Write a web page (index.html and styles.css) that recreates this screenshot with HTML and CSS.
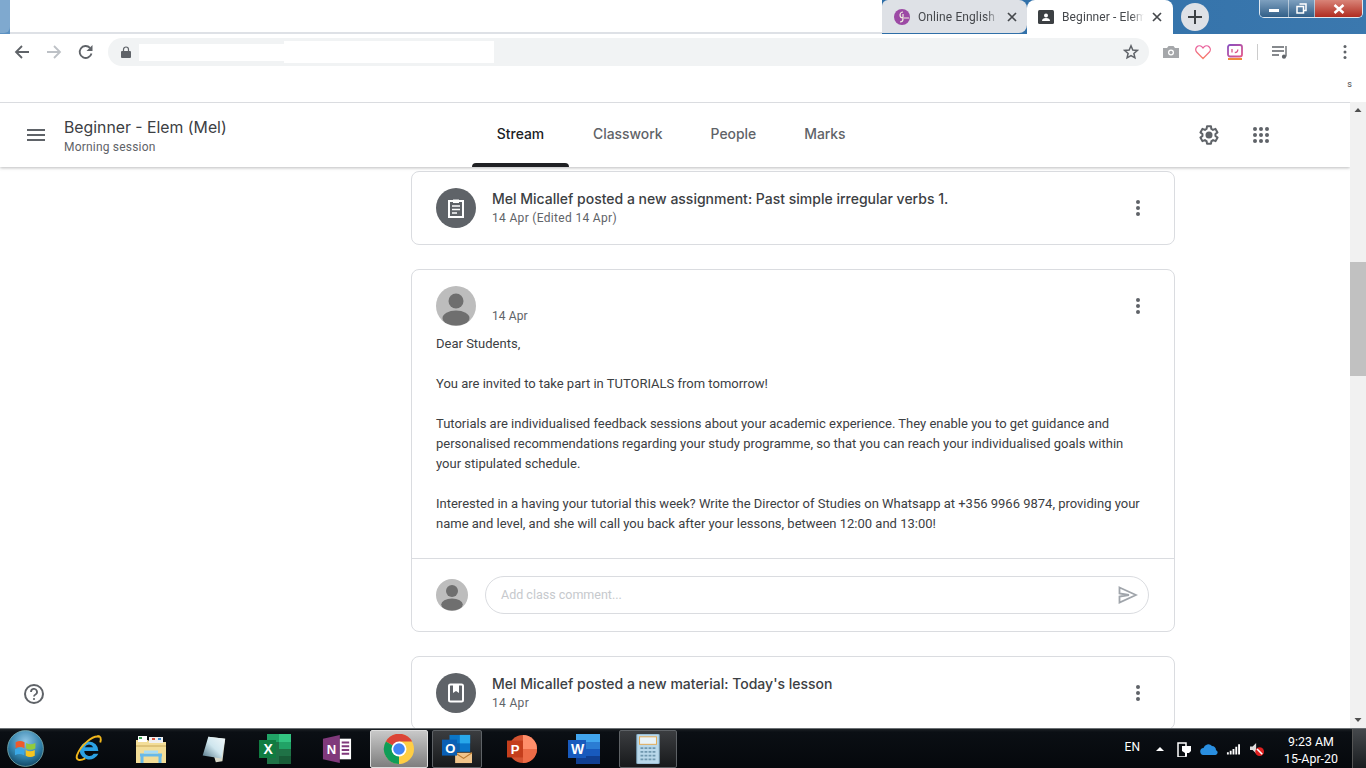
FILE: index.html
```html
<!DOCTYPE html>
<html lang="en">
<head>
<meta charset="utf-8">
<title>Beginner - Elem (Mel)</title>
<link rel="stylesheet" href="styles.css">
</head>
<body>
<div class="chrome-top">
  <div class="edge-left"></div>
  <div class="tab-blank"></div>
  <div class="tab tab-bg">
    <svg class="favicon" viewBox="0 0 16 16"><circle cx="8" cy="8" r="8" fill="#9c4aa5"/><path d="M9 3a3 3 0 1 0 0 6M9 5v5q0 3-3 3" fill="none" stroke="#eed" stroke-width="1.2"/><path d="M10 9h5" stroke="#eed"/></svg>
    <span class="tab-title">Online English C</span>
    <svg class="tab-x" viewBox="0 0 10 10"><path d="M1 1l8 8M9 1l-8 8" stroke="#45484c" stroke-width="1.7"/></svg>
  </div>
  <div class="tab tab-on">
    <svg class="favicon" viewBox="0 0 16 16"><rect width="16" height="14" y="1" rx="1.5" fill="#3c4043"/><circle cx="8" cy="6.5" r="2" fill="#fff"/><path d="M4 12q0-3 4-3t4 3z" fill="#fff"/></svg>
    <span class="tab-title">Beginner - Elem</span>
    <svg class="tab-x" viewBox="0 0 10 10"><path d="M1 1l8 8M9 1l-8 8" stroke="#45484c" stroke-width="1.7"/></svg>
  </div>
  <div class="newtab"><svg viewBox="0 0 14 14" width="14" height="14"><path d="M7 0v14M0 7h14" stroke="#3c4043" stroke-width="2"/></svg></div>
  <div class="winctl">
    <div class="wc wc-min"><span class="wc-dash"></span></div>
    <div class="wc wc-max"><svg viewBox="0 0 11 11" width="11" height="11"><path d="M3.500 1h6.500v6.500h-2M1 3.500h6.500v6.500h-6.500z" fill="none" stroke="#fff" stroke-width="1.500"/></svg></div>
    <div class="wc wc-close"><svg viewBox="0 0 12 10" width="12" height="10"><path d="M1.500 1l9 8M10.500 1l-9 8" stroke="#fff" stroke-width="2.500"/></svg></div>
  </div>
</div>

<div class="toolbar">
  <svg class="nav-ic" viewBox="0 0 16 16"><path d="M15 8H2M8 2L2 8l6 6" fill="none" stroke="#5f6368" stroke-width="1.800"/></svg>
  <svg class="nav-ic" viewBox="0 0 16 16"><path d="M1 8h13M8 2l6 6-6 6" fill="none" stroke="#bdc1c6" stroke-width="1.800"/></svg>
  <svg class="nav-ic" viewBox="0 0 16 16"><path d="M13.500 9.500A6 6 0 1 1 12 3.800" fill="none" stroke="#5f6368" stroke-width="1.800"/><path d="M14.500 1v6h-6z" fill="#5f6368"/></svg>
  <div class="omnibox">
    <svg class="lock" viewBox="0 0 10 12"><path d="M2.500 5V3.500a2.500 2.500 0 0 1 5 0V5" fill="none" stroke="#5f6368" stroke-width="1.200"/><rect y="5" width="10" height="7" rx="1" x="0" fill="#5f6368" /></svg>
    <div class="redact-a"></div>
    <div class="redact-b"></div>
    <svg class="star" viewBox="0 0 16 16"><path d="M8 1.800l1.800 4.200 4.500.4-3.400 3 1 4.400L8 11.500l-3.900 2.300 1-4.400-3.400-3 4.500-.4z" fill="none" stroke="#5f6368" stroke-width="1.500"/></svg>
  </div>
  <div class="ext">
    <svg class="ext-ic" viewBox="0 0 16 16"><path d="M0 4h4l1.500-2h5L12 4h4v10H0z" fill="#a5a7aa"/><circle cx="8" cy="8.500" r="3" fill="#fff"/><circle cx="8" cy="8.500" r="1.700" fill="#a5a7aa"/></svg>
    <svg class="ext-ic" viewBox="0 0 16 16"><defs><linearGradient id="hg" x1="0" y1="0" x2="0" y2="1"><stop offset="0" stop-color="#e85fa0"/><stop offset="1" stop-color="#f9806a"/></linearGradient></defs><path d="M8 14.500L1.800 8.200a3.700 3.700 0 0 1 5.200-5.300L8 4l1-1.100a3.700 3.700 0 0 1 5.200 5.300z" fill="none" stroke="url(#hg)" stroke-width="1.300"/></svg>
    <svg class="ext-ic" viewBox="0 0 16 16"><defs><linearGradient id="ig" x1="0" y1="0" x2="1" y2="1"><stop offset="0" stop-color="#8a4fc0"/><stop offset="1" stop-color="#e2578a"/></linearGradient></defs><rect x="1" y="1" width="14" height="11.500" rx="2" fill="none" stroke="url(#ig)" stroke-width="1.800"/><path d="M5 5v3.500M10.800 5.500q0 3-3 3" fill="none" stroke="#d9568c" stroke-width="1.300"/><rect x="1" y="14" width="14" height="2" fill="#f08a3c"/></svg>
    <span class="ext-sep"></span>
    <svg class="ext-ic" viewBox="0 0 16 16"><path d="M0 3h12M0 7h12M0 11h7" stroke="#5f6368" stroke-width="1.400"/><path d="M14 2v10.500" stroke="#5f6368" stroke-width="1.300"/><circle cx="12" cy="12.700" r="2.100" fill="#5f6368"/></svg>
    <svg class="ext-dots" viewBox="0 0 4 16"><circle cx="2" cy="2.500" r="1.500" fill="#5f6368"/><circle cx="2" cy="8" r="1.500" fill="#5f6368"/><circle cx="2" cy="13.500" r="1.500" fill="#5f6368"/></svg>
  </div>
</div>
<div class="bookmarks"><span>s</span></div>

<div class="viewport">
  <div class="page">
    <header class="appbar">
      <div class="brand">
        <svg class="burger" viewBox="0 0 18 12"><path d="M0 1h18M0 6h18M0 11h18" stroke="#5f6368" stroke-width="2"/></svg>
        <div class="brand-text">
          <div class="class-name">Beginner - Elem (Mel)</div>
          <div class="class-sub">Morning session</div>
        </div>
      </div>
      <nav class="tabs">
        <a class="navtab navtab-on">Stream</a>
        <a class="navtab">Classwork</a>
        <a class="navtab">People</a>
        <a class="navtab">Marks</a>
      </nav>
      <div class="app-actions">
        <svg class="gear" viewBox="0 0 24 24"><path d="M19.400 13a7.600 7.600 0 0 0 0-2l2.100-1.600-2-3.500-2.500 1a7.600 7.600 0 0 0-1.700-1L15 3.300h-4l-.4 2.600a7.600 7.600 0 0 0-1.700 1l-2.500-1-2 3.500L6.500 11a7.600 7.600 0 0 0 0 2l-2.100 1.600 2 3.500 2.500-1a7.600 7.600 0 0 0 1.700 1l.4 2.600h4l.4-2.600a7.600 7.600 0 0 0 1.700-1l2.500 1 2-3.500z" transform="translate(-1 0)" fill="none" stroke="#5f6368" stroke-width="2" stroke-linejoin="round"/><circle cx="12" cy="12" r="3.500" fill="#5f6368"/></svg>
        <svg class="apps" viewBox="0 0 16 16"><g fill="#5f6368"><circle cx="2" cy="2" r="2"/><circle cx="8" cy="2" r="2"/><circle cx="14" cy="2" r="2"/><circle cx="2" cy="8" r="2"/><circle cx="8" cy="8" r="2"/><circle cx="14" cy="8" r="2"/><circle cx="2" cy="14" r="2"/><circle cx="8" cy="14" r="2"/><circle cx="14" cy="14" r="2"/></g></svg>
      </div>
    </header>
    <main class="stream">
      <section class="card card-compact card-first">
        <div class="badge">
          <svg viewBox="0 0 20 22" width="20" height="22"><path d="M3 4h14v16H3z" fill="none" stroke="#fff" stroke-width="2"/><path d="M7 2.500h6v3.500H7z" fill="#fff"/><path d="M6 9h8M6 12.500h8M6 16h5" stroke="#fff" stroke-width="1.700"/></svg>
        </div>
        <div class="meta">
          <div class="meta-title">Mel Micallef posted a new assignment: Past simple irregular verbs 1.</div>
          <div class="meta-date">14 Apr (Edited 14 Apr)</div>
        </div>
        <svg class="more" viewBox="0 0 4 16"><circle cx="2" cy="2" r="2"/><circle cx="2" cy="8" r="2"/><circle cx="2" cy="14" r="2"/></svg>
      </section>

      <section class="card card-post">
        <div class="post-head">
          <svg class="avatar" viewBox="0 0 40 40"><circle cx="20" cy="20" r="20" fill="#bdbdbd"/><circle cx="20" cy="15" r="7.500" fill="#6f6f6f"/><ellipse cx="20" cy="32" rx="13.500" ry="7.500" fill="#6f6f6f"/></svg>
          <div class="post-date">14 Apr</div>
          <svg class="more more-post" viewBox="0 0 4 16"><circle cx="2" cy="2" r="2"/><circle cx="2" cy="8" r="2"/><circle cx="2" cy="14" r="2"/></svg>
        </div>
        <div class="post-body">
          <p>Dear Students,</p>
          <p>You are invited to take part in TUTORIALS from tomorrow!</p>
          <p>Tutorials are individualised feedback sessions about your academic experience. They enable you to get guidance and<br>personalised recommendations regarding your study programme, so that you can reach your individualised goals within<br>your stipulated schedule.</p>
          <p>Interested in a having your tutorial this week? Write the Director of Studies on Whatsapp at +356 9966 9874, providing your<br>name and level, and she will call you back after your lessons, between 12:00 and 13:00!</p>
        </div>
        <div class="comment-row">
          <svg class="avatar-sm" viewBox="0 0 40 40"><circle cx="20" cy="20" r="20" fill="#bdbdbd"/><circle cx="20" cy="15" r="7.500" fill="#6f6f6f"/><ellipse cx="20" cy="32" rx="13.500" ry="7.500" fill="#6f6f6f"/></svg>
          <div class="comment-box">
            <span class="comment-ph">Add class comment...</span>
            <svg class="send" viewBox="0 0 20 18"><path d="M1.500 1.500L18 9 1.500 16.500V10.500L11 9 1.500 7.500z" fill="none" stroke="#a0a5ab" stroke-width="1.800"/></svg>
          </div>
        </div>
      </section>

      <section class="card card-compact">
        <div class="badge">
          <svg viewBox="0 0 18 20" width="18" height="20"><rect x="2" y="1.500" width="14" height="17" rx="1.500" fill="none" stroke="#fff" stroke-width="2"/><path d="M6 2h6v8l-3-2-3 2z" fill="#fff"/></svg>
        </div>
        <div class="meta">
          <div class="meta-title">Mel Micallef posted a new material: Today's lesson</div>
          <div class="meta-date">14 Apr</div>
        </div>
        <svg class="more" viewBox="0 0 4 16"><circle cx="2" cy="2" r="2"/><circle cx="2" cy="8" r="2"/><circle cx="2" cy="14" r="2"/></svg>
      </section>
    </main>
    <svg class="help" viewBox="0 0 20 20"><circle cx="10" cy="10" r="9" fill="none" stroke="#5f6368" stroke-width="2"/><path d="M7 8a3 3 0 1 1 4.500 2.500Q10 11.300 10 12.500" fill="none" stroke="#5f6368" stroke-width="1.800"/><circle cx="10" cy="15" r="1.100" fill="#5f6368"/></svg>
  </div>
  <div class="scrollbar">
    <svg class="sb-arrow" viewBox="0 0 16 16"><path d="M4.500 10L8 6l3.500 4z" fill="#505050"/></svg>
    <div class="sb-track"><div class="sb-thumb"></div></div>
    <svg class="sb-arrow" viewBox="0 0 16 16"><path d="M4.500 6L8 10l3.500-4z" fill="#505050"/></svg>
  </div>
</div>

<footer class="taskbar">
  <div class="start">
    <svg viewBox="0 0 30 30" width="37" height="37"><defs><radialGradient id="orb" cx=".5" cy=".3" r=".75"><stop offset="0" stop-color="#8fc6e6"/><stop offset=".6" stop-color="#2f7fa8"/><stop offset="1" stop-color="#0f3d58"/></radialGradient></defs><circle cx="15" cy="15" r="14.500" fill="url(#orb)" stroke="#8bb" stroke-width=".6"/><path d="M7 10q3.500-2 7.200 0v4.700q-3.700-2-7.200 0z" fill="#ee5a2c"/><path d="M15.500 10.500q3.500 2 7.500 0V15q-4 2-7.500 0z" fill="#92cb3c"/><path d="M6.500 15.700q3.500-2 7.400 0v4.700q-3.900-2-7.400 0z" fill="#3aa8e6"/><path d="M15.200 16.200q3.500 2 7.300 0v4.600q-3.800 2-7.300 0z" fill="#f7c51f"/></svg>
  </div>
  <div class="tb-item">
    <svg viewBox="0 0 30 32" width="30" height="32"><path d="M5 18a10 10 0 1 1 20 0H10a5.500 5.500 0 0 0 10 3h5a10.500 10.500 0 0 1-20-3z" fill="#2ba1e4"/><path d="M10.500 14a5 5 0 0 1 9 0z" fill="#07111c"/><path d="M26 3C19 1 6 12 2 23c-1 5 3 6 9 3" fill="none" stroke="#f2b71c" stroke-width="2"/><path d="M24 2q5 0 3 7" fill="none" stroke="#f2b71c" stroke-width="2"/></svg>
  </div>
  <div class="tb-item">
    <svg viewBox="0 0 32 30" width="32" height="30"><path d="M1 6h12l2 2h16v21H1z" fill="#f3dd97"/><path d="M3 2h9v6H3z" fill="#fff"/><path d="M14 3h14v6H14z" fill="#f0f0f0"/><rect x="4" y="3" width="3" height="2" fill="#3aa655"/><rect x="17" y="4" width="3" height="2" fill="#d9533f"/><rect x="23" y="4" width="3" height="2" fill="#3e8ed0"/><path d="M1 12h30" stroke="#c8a85a"/><path d="M5 21h22M7 21v8M25 21v8" stroke="#68b9e8" stroke-width="3" fill="none"/><path d="M9 18h14" stroke="#a8dcf5" stroke-width="3"/></svg>
  </div>
  <div class="tb-item">
    <svg viewBox="0 0 28 32" width="28" height="32"><defs><linearGradient id="nb" x1="0" y1="1" x2="1" y2="0"><stop offset="0" stop-color="#4f7385"/><stop offset=".5" stop-color="#cfe6ee"/><stop offset="1" stop-color="#f2f8fa"/></linearGradient></defs><path d="M9 3l18 2-3 24-7 1z" fill="#d8d8c8"/><path d="M9 3L27 5 23 26 3 23z" fill="url(#nb)"/></svg>
  </div>
  <div class="tb-item">
    <svg viewBox="0 0 32 30" width="32" height="30"><rect x="8" y="0" width="24" height="30" fill="#1f7246"/><rect x="20" y="0" width="12" height="8" fill="#33c481"/><rect x="8" y="0" width="12" height="8" fill="#21a366"/><rect x="20" y="8" width="12" height="7" fill="#21a366"/><rect x="20" y="22" width="12" height="8" fill="#185c37"/><rect x="0" y="6" width="17" height="18" fill="#107c41"/><text x="4.500" y="20" class="glyph">X</text></svg>
  </div>
  <div class="tb-item">
    <svg viewBox="0 0 30 32" width="30" height="32"><path d="M0 5L18 1v30L0 27z" fill="#80397b"/><rect x="18" y="5" width="12" height="22" fill="#fff"/><path d="M20 9h8M20 13h8M20 17h8M20 21h8" stroke="#80397b" stroke-width="2"/><text x="4" y="21" class="glyph">N</text></svg>
  </div>
  <div class="tb-item tb-active">
    <svg viewBox="0 0 32 32" width="32" height="32"><circle cx="16" cy="16" r="16" fill="#ffce44"/><path d="M16 16L2 8A16 16 0 0 1 30 8H16z" fill="#db4437"/><path d="M16 16L16 32A16 16 0 0 1 2 8z" fill="#0f9d58"/><path d="M16 16H30A16 16 0 0 1 16 32z" fill="#ffce44"/><circle cx="16" cy="16" r="8" fill="#fff"/><circle cx="16" cy="16" r="6.200" fill="#4285f4"/></svg>
  </div>
  <div class="tb-item tb-open tb-outlook">
    <svg viewBox="0 0 32 32" width="32" height="32"><rect x="8" y="1" width="22" height="18" fill="#0a76c9"/><rect x="19" y="1" width="11" height="9" fill="#28a8ea"/><rect x="8" y="10" width="11" height="9" fill="#0f5ea8"/><path d="M14 20h18v11H14z" fill="#f0c48a"/><path d="M14 20l9 6 9-6" fill="none" stroke="#b9792f" stroke-width="1.200"/><rect x="0" y="6" width="16" height="17" fill="#0a5fb4"/><text x="3.500" y="20" class="glyph">O</text></svg>
  </div>
  <div class="tb-item tb-ppt">
    <svg viewBox="0 0 32 32" width="32" height="32"><circle cx="17" cy="16" r="15" fill="#d35230"/><path d="M17 1a15 15 0 0 1 15 15H17z" fill="#ff8f6b"/><path d="M17 16h15a15 15 0 0 1-15 15z" fill="#ed6c47"/><rect x="0" y="7" width="17" height="18" fill="#c43e1c"/><text x="4" y="21" class="glyph">P</text></svg>
  </div>
  <div class="tb-item">
    <svg viewBox="0 0 32 30" width="32" height="30"><rect x="8" y="0" width="24" height="30" fill="#2b7cd3"/><rect x="8" y="0" width="24" height="8" fill="#41a5ee"/><rect x="8" y="15" width="24" height="7" fill="#185abd"/><rect x="8" y="22" width="24" height="8" fill="#103f91"/><rect x="0" y="6" width="18" height="18" fill="#185abd"/><text x="3" y="20" class="glyph">W</text></svg>
  </div>
  <div class="tb-item tb-open tb-calc">
    <svg viewBox="0 0 24 32" width="24" height="32"><rect width="24" height="32" rx="1" fill="#b9d8ea" stroke="#7aa3bd"/><rect x="3" y="3" width="18" height="8" fill="#e9f3f8" stroke="#e5a64a"/><path d="M4 15h16M4 19h16M4 23h16M4 27h16" stroke="#6f97ae" stroke-width="2" stroke-dasharray="3 1.300"/></svg>
  </div>
  <div class="tray">
    <span class="lang">EN</span>
    <svg class="tray-up" viewBox="0 0 8 5"><path d="M0 5l4-4 4 4z" fill="#fff"/></svg>
    <svg class="tray-ic tray-plug" viewBox="0 0 14 16"><path d="M1 2h8v14H1z" fill="none" stroke="#fff" stroke-width="1.500"/><path d="M5 5h9v5l-2 2h-2v3H8v-3L5 10z" fill="#fff"/></svg>
    <svg class="tray-cloud" viewBox="0 0 18 12"><path d="M4 12a3.500 3.500 0 0 1-.5-7A5 5 0 0 1 12 3a4 4 0 0 1 4 4.200A2.500 2.500 0 0 1 15.500 12z" fill="#2a8fe0"/></svg>
    <svg class="tray-ic tray-signal" viewBox="0 0 15 12"><path d="M1 9.500h2V12H1zM4 8h2v4H4zM7 6h2v6H7zM10 3.500h2V12h-2zM13 1h2v11h-2z" fill="#fff"/></svg>
    <svg class="tray-ic tray-mute" viewBox="0 0 16 16"><path d="M0 5h3l4-4v12L3 9H0z" fill="#ddd"/><circle cx="11" cy="11" r="5" fill="#e02020"/><path d="M8 8l6 6" stroke="#fff" stroke-width="1.800"/></svg>
    <div class="clock"><div>9:23 AM</div><div>15-Apr-20</div></div>
    <div class="show-desktop"></div>
  </div>
</footer>
</body>
</html>
```
FILE: styles.css
```css
* { box-sizing: border-box; }
html, body { margin: 0; padding: 0; width: 1366px; height: 768px; overflow: hidden; }
body { display: flex; flex-direction: column; background: #fff; font-family: Roboto, "Liberation Sans", sans-serif; color: #3c4043; }

.chrome-top { height: 34px; flex: none; display: flex; align-items: flex-start; background: linear-gradient(90deg, #5d92c2 0%, #2b6ca6 60%, #3b78ae 100%); }
.edge-left { width: 10px; height: 33px; background: #7fa9cf; border-radius: 0 0 6px 0; }
.tab-blank { width: 872px; height: 34px; background: #fff; border-bottom: 2px solid #dee1e6; }
.tab { width: 145px; height: 34px; display: flex; align-items: center; padding: 0 10px 0 11px; font-size: 12px; white-space: nowrap; }
.tab-bg { background: #dee1e6; border-radius: 6px 8px 8px 0; height: 33px; }
.tab-on { background: #fff; border-radius: 8px 8px 0 0; width: 146px; padding-right: 11px; }
.favicon { width: 16px; height: 16px; flex: none; margin-right: 8px; }
.tab-bg .favicon { margin-left: 1px; }
.tab-title { flex: 1; overflow: hidden; color: #45484c; letter-spacing: .1px; -webkit-mask-image: linear-gradient(90deg, #000 84%, transparent 100%); mask-image: linear-gradient(90deg, #000 84%, transparent 100%); }
.tab-x { width: 10px; height: 10px; flex: none; margin-left: 8px; }
.newtab { width: 28px; height: 28px; margin: 3px 0 0 8px; border-radius: 50%; background: #dee1e6; display: flex; align-items: center; justify-content: center; }
.winctl { margin-left: auto; margin-right: 3px; display: flex; height: 18px; border: 1px solid #dfe8f0; border-top: 0; border-radius: 0 0 5px 5px; overflow: hidden; }
.wc { height: 17px; display: flex; align-items: center; justify-content: center; border-right: 1px solid rgba(255,255,255,.5); }
.wc-min { width: 29px; background: linear-gradient(#7ea0bf, #315f88); }
.wc-dash { width: 10px; height: 3px; background: #fff; margin-top: 4px; }
.wc-max { width: 26px; background: linear-gradient(#7ea0bf, #315f88); }
.wc-close { width: 47px; border-right: 0; background: linear-gradient(#d98478, #b02c20); }

.toolbar { height: 37px; flex: none; display: flex; align-items: center; padding: 4px 0 5px 14px; background: #fff; }
.nav-ic { width: 16px; height: 16px; flex: none; margin-right: 16px; }
.omnibox { width: 1041px; height: 28px; margin-left: -2px; border-radius: 14px; background: #f1f3f4; display: flex; align-items: center; padding-left: 13px; }
.lock { width: 10px; height: 12px; flex: none; margin-right: 8px; }
.redact-a { width: 145px; height: 17px; background: #fff; flex: none; }
.redact-b { width: 210px; height: 22px; background: #fff; flex: none; }
.star { width: 16px; height: 16px; margin-left: auto; margin-right: 10px; flex: none; }
.ext { flex: 1; display: flex; align-items: center; padding-left: 14px; }
.ext-ic { width: 16px; height: 16px; flex: none; margin-right: 16px; }
.ext-sep { width: 1px; height: 16px; background: #ccc; margin: 0 14px 0 -2px; }
.ext-dots { width: 4px; height: 16px; margin-left: 39px; flex: none; }

.bookmarks { height: 31px; flex: none; display: flex; justify-content: flex-end; padding: 8px 14px 0 0; font-size: 9px; background: #fff; color: #444; }

.viewport { height: 626px; flex: none; display: flex; }
.page { width: 1350px; flex: none; display: flex; flex-direction: column; position: relative; overflow: hidden; }
.appbar { height: 65px; flex: none; display: flex; align-items: stretch; border-top: 1px solid #dadce0; background: #fff; box-shadow: 0 1px 3px rgba(60,64,67,.35); position: relative; z-index: 2; }
.brand { width: 472px; flex: none; display: flex; align-items: center; padding: 3px 0 0 27px; }
.burger { width: 18px; height: 12px; flex: none; margin: -3px 19px 0 0; }
.class-name { font-family: Inter, Roboto, sans-serif; font-size: 15.800px; line-height: 20px; color: #3c4043; }
.class-sub { font-size: 12px; line-height: 18px; letter-spacing: .2px; color: #5f6368; }
.tabs { display: flex; }
.navtab { padding: 0 24px 3px; display: flex; align-items: center; font-family: Inter, Roboto, sans-serif; font-size: 13.900px; font-weight: 500; color: #5f6368; position: relative; }
.navtab-on { color: #202124; min-width: 97px; justify-content: center; padding: 0 0 3px; }
.navtab-on::after { content: ""; position: absolute; left: 0; right: 0; bottom: 0; height: 4px; background: #202124; border-radius: 4px 4px 0 0; }
.app-actions { margin-left: auto; padding-right: 81px; display: flex; align-items: center; gap: 32px; }
.gear { width: 24px; height: 24px; flex: none; }
.apps { width: 16px; height: 16px; flex: none; }

.stream { flex: 1; padding: 4px 0 0 411px; overflow: hidden; display: flex; flex-direction: column; gap: 24px; }
.card { width: 764px; flex: none; border: 1px solid #dadce0; border-radius: 8px; background: #fff; }
.card-compact { height: 74px; padding: 0 24px; display: flex; align-items: center; }
.badge { width: 40px; height: 40px; border-radius: 50%; background: #5f6368; display: flex; align-items: center; justify-content: center; flex: none; margin-right: 16px; }
.meta { flex: 1; margin: -2px 0 -3px; }
.meta-title { font-family: Inter, Roboto, sans-serif; font-size: 14px; line-height: 19px; font-weight: 500; color: #3c4043; white-space: nowrap; }
.meta-date { font-size: 12px; line-height: 21px; letter-spacing: .32px; color: #5f6368; }
.more { width: 4px; height: 16px; fill: #5f6368; flex: none; margin-right: 10px; }
.card-post { height: 363px; display: flex; flex-direction: column; }
.post-head { height: 64px; flex: none; display: flex; padding: 16px 24px 0; }
.avatar { width: 40px; height: 40px; flex: none; margin-right: 16px; }
.post-date { flex: 1; font-size: 12px; line-height: 16px; padding-top: 22px; color: #5f6368; letter-spacing: .1px; }
.more-post { margin-top: 12px; }
.post-body { flex: none; height: 225px; padding: 0 24px; border-bottom: 1px solid #dadce0; font-size: 13px; line-height: 20px; color: #3c4043; }
.post-body p { margin: 0 0 20px; white-space: nowrap; }
.comment-row { flex: 1; display: flex; align-items: center; padding: 0 25px 1px 24px; }
.avatar-sm { width: 32px; height: 32px; flex: none; margin-right: 17px; }
.comment-box { flex: 1; height: 38px; border: 1px solid #dadce0; border-radius: 19px; display: flex; align-items: center; padding: 0 10px 0 15px; }
.comment-ph { flex: 1; font-size: 12.500px; color: #c6c9cd; }
.send { width: 20px; height: 18px; flex: none; }
.help { position: absolute; left: 24px; bottom: 24px; width: 20px; height: 20px; }

.scrollbar { width: 16px; flex: none; background: #f1f1f1; display: flex; flex-direction: column; }
.sb-arrow { width: 16px; height: 16px; flex: none; }
.sb-track { flex: 1; padding-top: 144px; }
.sb-thumb { height: 114px; background: #c1c1c1; }

.taskbar { flex: 1; display: flex; align-items: center; background: linear-gradient(#1c2024 0, #0b0f14 3px, #05080c 100%); border-top: 1px solid #6b7074; position: relative; color: #fff; }
.start { width: 58px; padding-left: 7px; display: flex; flex: none; }
.tb-item { width: 62px; height: 38px; flex: none; display: flex; align-items: center; justify-content: center; }
.tb-item svg { height: 30px; }
.tb-active { background: linear-gradient(#c8c8c8, #7e7e7e); border: 1px solid #ddd; border-radius: 2px; width: 58px; margin: 0 4px 0 2px; }
.tb-open { background: linear-gradient(#3b3d40, #17191b); border: 1px solid #5e6266; border-radius: 2px; width: 50px; }
.tb-outlook { margin-right: 9px; }
.tb-calc { width: 58px; margin-left: 4px; }
.glyph { font-family: "Liberation Sans", sans-serif; font-weight: 700; font-size: 14px; fill: #fff; }
.tray { margin-left: auto; display: flex; align-items: center; height: 100%; font-size: 12px; }
.lang { margin: -4px 16px 0 0; }
.tray-up { width: 8px; height: 5px; margin-right: 13px; }
.tray-ic { width: 14px; height: 16px; flex: none; }
.tray-plug { margin-right: 9px; }
.tray-cloud { width: 18px; height: 12px; margin-right: 8px; flex: none; }
.tray-signal { margin-right: 10px; }
.tray-mute { margin-right: 6px; }
.clock { width: 82px; text-align: center; line-height: 17px; font-size: 12.400px; padding-top: 2px; }
.show-desktop { width: 14px; height: 100%; border-left: 1px solid #555; background: linear-gradient(#45484c, #1a1d20); }
```
